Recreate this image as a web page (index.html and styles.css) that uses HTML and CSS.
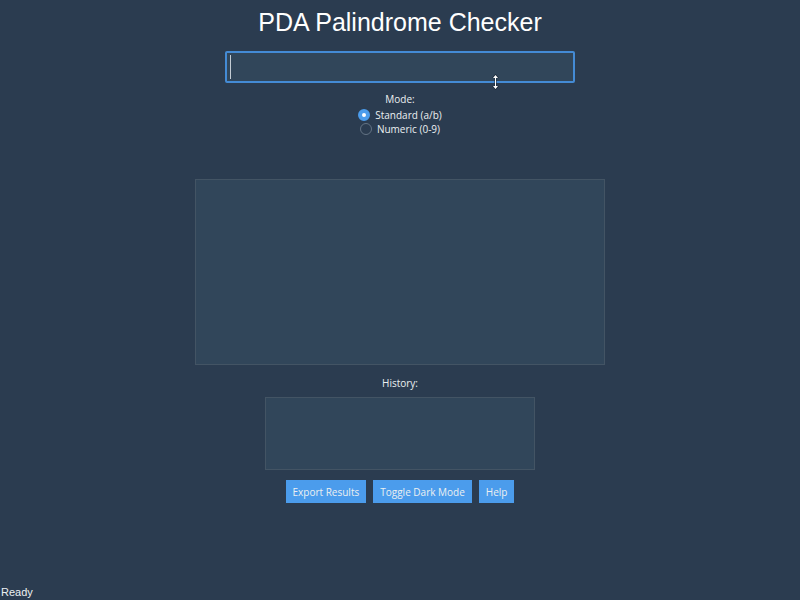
FILE: index.html
```html
<!DOCTYPE html>
<html lang="en">
<head>
<meta charset="utf-8">
<title>PDA Palindrome Checker</title>
<link rel="stylesheet" href="styles.css">
</head>
<body>
<main class="app">
  <h1 class="title">PDA Palindrome Checker</h1>
  <div class="entry">
    <input class="entry-input" type="text" aria-label="Input string">
    <span class="caret"></span>
    <svg class="pointer" width="7" height="16" viewBox="0 0 7 16" aria-hidden="true">
      <path d="M3.5 0 7 4H4.5V12H7L3.5 16 0 12H2.5V4H0Z" fill="#1d2a38"/>
      <path d="M3.5 1 6 4H4V12H6L3.5 15 1 12H3V4H1Z" fill="#fff"/>
    </svg>
  </div>
  <fieldset class="modes">
    <legend class="label">Mode:</legend>
    <label class="mode"><input type="radio" name="mode" checked>Standard (a/b)</label>
    <label class="mode"><input type="radio" name="mode">Numeric (0-9)</label>
  </fieldset>
  <textarea class="panel output" aria-label="Output" readonly></textarea>
  <label class="label" for="history">History:</label>
  <textarea class="panel history" id="history" readonly></textarea>
  <div class="actions">
    <button type="button">Export Results</button>
    <button type="button">Toggle Dark Mode</button>
    <button type="button">Help</button>
  </div>
</main>
<footer class="status">Ready</footer>
</body>
</html>
```
FILE: styles.css
```css
* {
  box-sizing: border-box;
}

body {
  display: flex;
  flex-direction: column;
  min-height: 100vh;
  margin: 0;
  background: #2b3c50;
  color: #ecf0f1;
  font: 10px/14px "Open Sans", sans-serif;
}

.app {
  display: flex;
  flex: 1;
  flex-direction: column;
  align-items: center;
}

.title {
  margin: 8px 0 15px;
  color: #fff;
  font: 25px/28px "Liberation Sans", sans-serif;
}

.entry {
  position: relative;
  width: 350px;
  max-width: 100%;
}

.entry-input {
  display: block;
  width: 100%;
  height: 32px;
  padding: 4px;
  border: 2px solid #448bd5;
  border-radius: 2px;
  outline: none;
  background: #31465a;
  color: inherit;
  font: inherit;
}

.caret {
  position: absolute;
  top: 4px;
  left: 5px;
  width: 1px;
  height: 24px;
  background: #c3ccd4;
}

.pointer {
  position: absolute;
  right: 76px;
  bottom: -7px;
}

.modes {
  display: flex;
  flex-direction: column;
  align-items: center;
  margin: 9px 0 43px;
  padding: 0;
  border: 0;
}

.modes legend {
  margin: 0 auto 2px;
  padding: 0;
}

.mode {
  display: flex;
  align-items: center;
  gap: 5px;
}

.mode input {
  appearance: none;
  width: 12px;
  height: 12px;
  margin: 0;
  border: 1px solid #637384;
  border-radius: 50%;
}

.mode input:checked {
  border: 4px solid #4b9cec;
  background: #fff;
}

.panel {
  display: block;
  max-width: 100%;
  border: 1px solid #435464;
  outline: none;
  background: #31465a;
  color: inherit;
  font: inherit;
  resize: none;
}

.output {
  width: 410px;
  height: 186px;
  margin-bottom: 11px;
}

.history {
  width: 270px;
  height: 73px;
  margin: 7px 0 10px;
}

.actions {
  display: flex;
  gap: 7px;
}

.actions button {
  height: 23px;
  padding: 0 7px;
  border: 0;
  background: #4b9cec;
  color: #ecf0f1;
  font: inherit;
}

.status {
  padding: 0 1px;
  font: 11px/15px "Liberation Sans", sans-serif;
}
```
